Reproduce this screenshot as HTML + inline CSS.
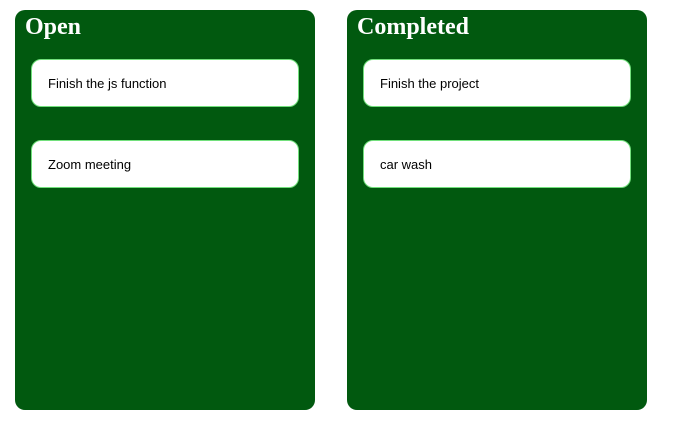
<!DOCTYPE html>
<html><head><style>
body{margin:0;background:#fff;width:683px;height:436px;position:relative;overflow:hidden}
.p{position:absolute;top:10px;width:300px;height:400px;background:#01590f;border-radius:10px}
.p h2{margin:0;position:absolute;left:10px;top:4px;font:bold 24px "Liberation Serif",serif;color:#fff}
.c{position:absolute;left:16px;width:266px;height:46px;background:#fff;border:1px solid #72e07c;border-radius:10px;box-sizing:content-box}
.c span{position:absolute;left:16px;top:16px;font:13px "Liberation Sans",sans-serif;color:#000}
</style></head><body>
<div class="p" style="left:15px"><h2>Open</h2>
<div class="c" style="top:49px"><span>Finish the js function</span></div>
<div class="c" style="top:130px"><span>Zoom meeting</span></div></div>
<div class="p" style="left:347px"><h2>Completed</h2>
<div class="c" style="top:49px"><span>Finish the project</span></div>
<div class="c" style="top:130px"><span>car wash</span></div></div>
</body></html>
